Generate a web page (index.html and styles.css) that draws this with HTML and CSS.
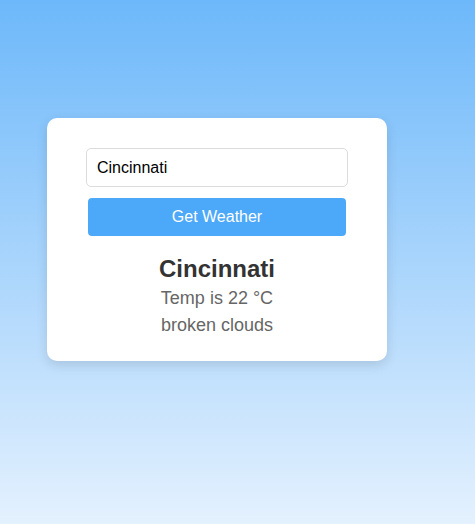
FILE: index.html
```html
<!DOCTYPE html>
<html lang="en">
<head>
<meta charset="utf-8">
<title>Weather</title>
<link rel="stylesheet" href="styles.css">
</head>
<body>
<main class="page">
  <section class="card">
    <input class="city-input" type="text" value="Cincinnati">
    <button class="get-btn" type="button">Get Weather</button>
    <div class="result">
      <h2 class="city-name">Cincinnati</h2>
      <p class="line">Temp is 22 °C</p>
      <p class="line">broken clouds</p>
    </div>
  </section>
</main>
</body>
</html>
```

FILE: styles.css
```css
html, body {
  margin: 0;
  padding: 0;
  height: 100%;
}
body {
  font-family: "Liberation Sans", Arial, sans-serif;
  background: linear-gradient(to bottom, #6db8fa 0%, #e4f1fe 100%);
  min-height: 524px;
}
.page {
  padding: 118px 0 0 47px;
}
.card {
  box-sizing: border-box;
  width: 340px;
  background: #fff;
  border-radius: 10px;
  box-shadow: 0 4px 12px rgba(0, 0, 0, 0.12);
  padding: 30px 39px 22px;
  display: flex;
  flex-direction: column;
  align-items: center;
}
.city-input {
  box-sizing: border-box;
  width: 262px;
  height: 39px;
  border: 1px solid #dcdcdc;
  border-radius: 5px;
  padding: 0 10px;
  font-family: inherit;
  font-size: 16px;
  color: #000;
  outline: none;
}
.get-btn {
  box-sizing: border-box;
  width: 258px;
  height: 38px;
  margin-top: 11px;
  border: none;
  border-radius: 4px;
  background: #4ca8f8;
  color: #fff;
  font-family: inherit;
  font-size: 16px;
  padding: 0;
}
.result {
  margin-top: 18px;
  text-align: center;
}
.city-name {
  margin: 0 0 1px;
  font-size: 24px;
  line-height: 30px;
  font-weight: bold;
  color: #333;
}
.line {
  margin: 0;
  font-size: 18px;
  line-height: 27px;
  color: #666;
}
```
